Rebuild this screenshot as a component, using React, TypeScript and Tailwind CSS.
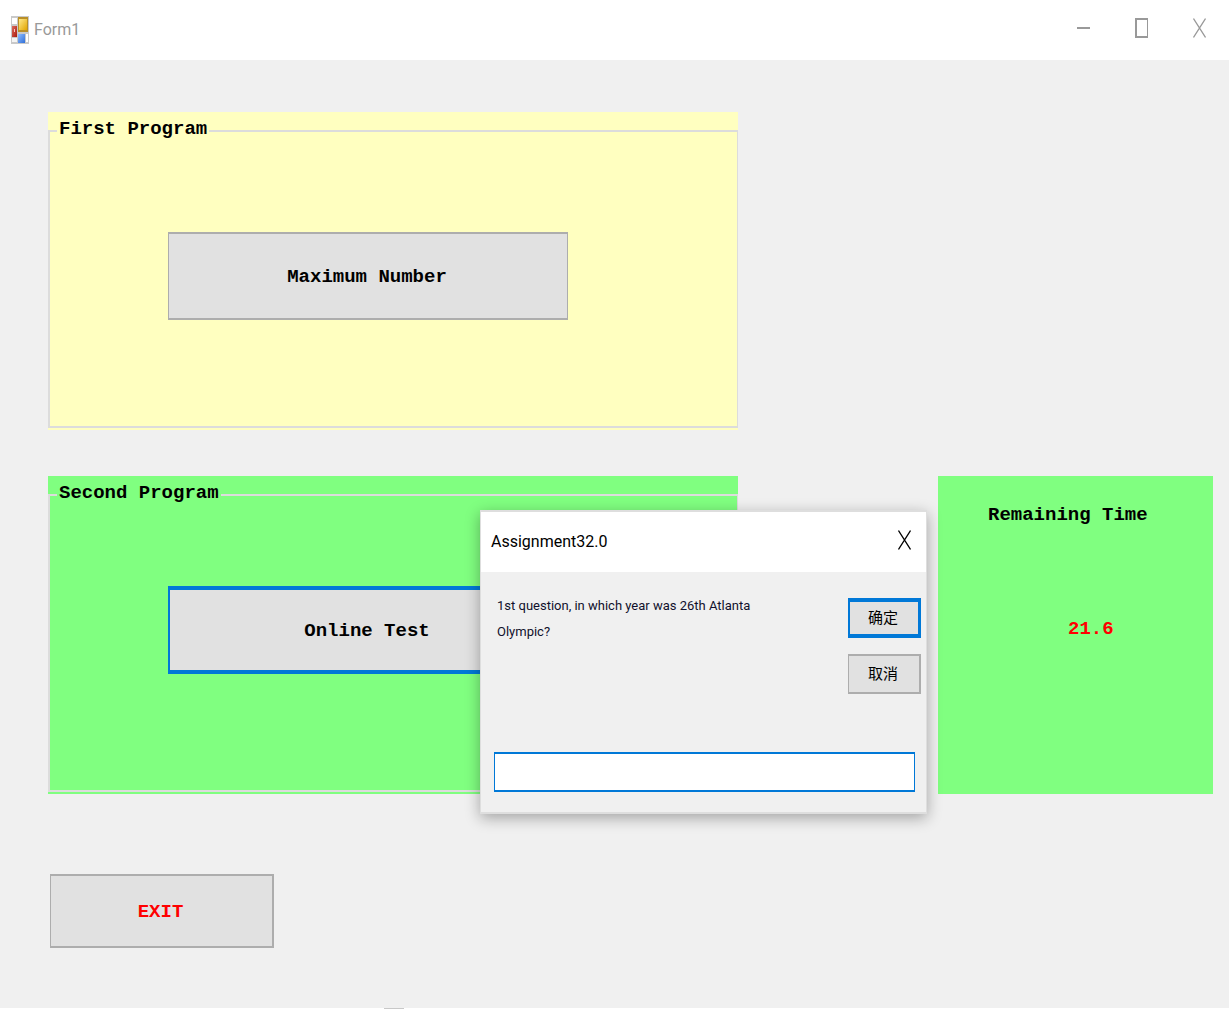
import type { ReactNode } from "react";

function AppIcon() {
  return (
    <svg className="h-7 w-[18px] shrink-0" viewBox="0 0 18 28" aria-hidden="true">
      <defs>
        <linearGradient id="gold" x1="0" y1="0" x2="1" y2="1">
          <stop offset="0" stopColor="#ffe98a" />
          <stop offset="1" stopColor="#e2a500" />
        </linearGradient>
        <linearGradient id="red" x1="0" y1="0" x2="1" y2="1">
          <stop offset="0" stopColor="#dd6a5c" />
          <stop offset="1" stopColor="#a81c10" />
        </linearGradient>
        <linearGradient id="blue" x1="0" y1="0" x2="1" y2="1">
          <stop offset="0" stopColor="#8fbcff" />
          <stop offset="1" stopColor="#2f6fd8" />
        </linearGradient>
      </defs>
      <rect width="18" height="28" fill="#c9c9c9" />
      <rect x="1" y="2" width="5" height="6" fill="#fff" />
      <rect x="1" y="22" width="5" height="4" fill="#f4f4f4" />
      <rect x="15" y="18" width="2" height="8" fill="#fff" />
      <rect x="7" y="1" width="10" height="15" fill="#b98f28" />
      <rect x="8" y="3" width="8" height="11" fill="url(#gold)" />
      <rect x="1" y="10" width="5" height="11" fill="url(#red)" />
      <rect x="3" y="13" width="1" height="3" fill="#f7c4bd" />
      <rect x="7" y="18" width="7" height="9" fill="url(#blue)" />
    </svg>
  );
}

function CloseGlyph() {
  return (
    <svg className="h-5 w-[13px]" viewBox="0 0 13 20" fill="none" stroke="currentColor" strokeWidth="1.3" aria-hidden="true">
      <path d="M0.5 0.5L12.5 19.5M12.5 0.5L0.5 19.5" />
    </svg>
  );
}

function GroupBox({ title, tone, children }: { title: string; tone: string; children: ReactNode }) {
  return (
    <div className={`${tone} pt-[3px] pb-[2px]`}>
      <fieldset className="h-[313px] border-2 border-r border-[#dcdcdc] pl-[118px]">
        <legend className="-ml-[111px] px-[2px] pb-1 text-[19px] leading-7 font-bold">{title}</legend>
        {children}
      </fieldset>
    </div>
  );
}

export default function App() {
  return (
    <div className="relative flex min-h-screen flex-col bg-[#f0f0f0] font-['Liberation_Mono',monospace] text-black">
      <header className="flex h-[60px] items-center bg-white pr-[23px] pl-[11px] text-[#999999]">
        <AppIcon />
        <h1 className="ml-[5px] flex-1 font-['Roboto',sans-serif] text-[16px]">Form1</h1>
        <div className="flex items-center gap-[45px] pb-1">
          <button type="button" aria-label="Minimize" className="flex h-5 w-[13px] items-center">
            <span className="h-[2px] w-full bg-[#999999]" />
          </button>
          <button type="button" aria-label="Maximize" className="h-5 w-[13px] border-2 border-r border-[#999999]" />
          <button type="button" aria-label="Close">
            <CloseGlyph />
          </button>
        </div>
      </header>

      <main className="grid flex-1 grid-cols-[690fr_275fr] content-start gap-x-[200px] gap-y-[46px] pt-[52px] pr-4 pl-12">
        <GroupBox title="First Program" tone="bg-[#ffffc0]">
          <button
            type="button"
            className="mt-[85px] h-[88px] w-[400px] border-2 border-x border-[#adadad] bg-[#e1e1e1] pt-[2px] pr-[2px] text-[19px] font-bold"
          >
            Maximum Number
          </button>
        </GroupBox>

        <div className="col-start-1">
          <GroupBox title="Second Program" tone="bg-[#80ff80]">
            <button
              type="button"
              className="mt-[75px] h-[88px] w-[400px] border-x-2 border-y-4 border-[#0078d7] bg-[#e1e1e1] pt-[2px] pr-[2px] text-[19px] font-bold"
            >
              Online Test
            </button>
          </GroupBox>
        </div>

        <section className="bg-[#80ff80] pt-[25px] text-[19px] leading-7 font-bold">
          <h2 className="pl-[50px]">Remaining Time</h2>
          <p className="mt-[86px] pl-[130px] text-[#ff0000]">21.6</p>
        </section>

        <button
          type="button"
          className="col-start-1 mt-[34px] ml-[2px] h-[74px] w-56 border-2 border-l border-[#adadad] bg-[#e1e1e1] pt-[2px] pr-[2px] text-[19px] font-bold text-[#ff0000]"
        >
          EXIT
        </button>
      </main>

      <footer className="h-px bg-white pl-96">
        <div className="h-px w-5 bg-[#c8c8c8]" />
      </footer>

      <form
        role="dialog"
        aria-labelledby="dialog-title"
        onSubmit={(event) => event.preventDefault()}
        className="absolute top-[510px] left-[480px] w-[447px] border border-t-2 border-b-2 border-[#dedede] bg-[#f0f0f0] pb-5 font-['Roboto',sans-serif] shadow-[0_4px_14px_rgba(0,0,0,0.32)]"
      >
        <div className="flex h-[60px] items-center justify-between bg-white pr-[15px] pl-[10px]">
          <h2 id="dialog-title" className="text-[16px]">Assignment32.0</h2>
          <button type="button" aria-label="Close" className="pb-1">
            <CloseGlyph />
          </button>
        </div>
        <div className="flex justify-between pt-[21px] pr-[5px] pl-4">
          <label htmlFor="answer" className="w-[270px] text-[13px] leading-[26px] text-[#10102c]">
            1st question, in which year was 26th Atlanta Olympic?
          </label>
          <div className="flex flex-col gap-4 pt-[5px] font-['Noto_Sans_CJK_SC',sans-serif] text-[15px]">
            <button type="submit" className="h-10 w-[73px] border-2 border-y-4 border-r-[3px] border-[#0078d7] bg-[#e1e1e1] pr-[2px] pb-[2px]">
              确定
            </button>
            <button type="button" className="h-10 w-[73px] border-2 border-l border-[#adadad] bg-[#e1e1e1] pr-[2px] pb-[2px]">
              取消
            </button>
          </div>
        </div>
        <div className="pt-[58px] pr-[11px] pl-[13px]">
          <input
            id="answer"
            type="text"
            className="block h-10 w-full border border-y-2 border-[#0078d7] bg-white px-2 text-[13px] outline-none"
          />
        </div>
      </form>
    </div>
  );
}
